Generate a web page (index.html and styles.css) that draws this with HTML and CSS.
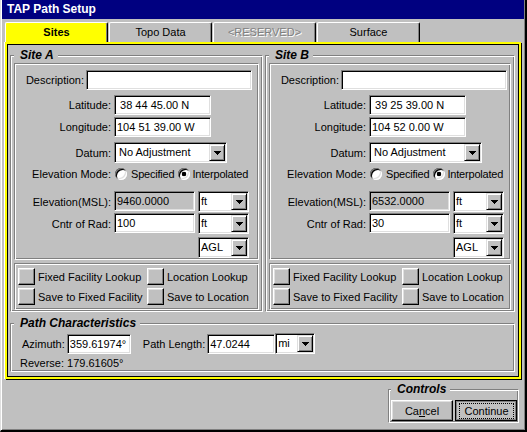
FILE: index.html
```html
<!DOCTYPE html>
<html lang="en">
<head>
<meta charset="utf-8">
<title>TAP Path Setup</title>
<link rel="stylesheet" href="styles.css">
</head>
<body>
<div class="window">
  <div class="titlebar">TAP Path Setup</div>
  <div class="tabs">
    <div class="tab tab-active">Sites</div>
    <div class="tab">Topo Data</div>
    <div class="tab tab-disabled">&lt;RESERVED&gt;</div>
    <div class="tab">Surface</div>
  </div>
  <div class="panel">
    <div class="sites">
      <fieldset class="group site">
        <legend>Site A</legend>
        <div class="box fields">
          <div class="row row-desc"><span class="lbl lbl-desc">Description:</span><input class="field f-desc" type="text" value=""></div>
          <div class="row row-lat"><span class="lbl">Latitude:</span><input class="field f-coord" type="text" value=" 38 44 45.00 N"></div>
          <div class="row row-lon"><span class="lbl">Longitude:</span><input class="field f-coord" type="text" value="104 51 39.00 W"></div>
          <div class="row row-datum"><span class="lbl">Datum:</span><div class="combo c-datum"><span class="combo-text">No Adjustment</span><span class="combo-btn"><svg width="7" height="4" viewBox="0 0 7 4"><polygon points="0,0 7,0 3.5,4" fill="#000"/></svg></span></div></div>
          <div class="row row-mode"><span class="lbl">Elevation Mode:</span><span class="radio"></span><span class="opt">Specified</span><span class="radio radio-on"></span><span class="opt opt-2">Interpolated</span></div>
          <div class="row row-elev"><span class="lbl">Elevation(MSL):</span><input class="field f-num f-ro" type="text" value="9460.0000" readonly><div class="combo c-unit"><span class="combo-text">ft</span><span class="combo-btn"><svg width="7" height="4" viewBox="0 0 7 4"><polygon points="0,0 7,0 3.5,4" fill="#000"/></svg></span></div></div>
          <div class="row row-cntr"><span class="lbl">Cntr of Rad:</span><input class="field f-num" type="text" value="100"><div class="combo c-unit"><span class="combo-text">ft</span><span class="combo-btn"><svg width="7" height="4" viewBox="0 0 7 4"><polygon points="0,0 7,0 3.5,4" fill="#000"/></svg></span></div></div>
          <div class="row row-agl"><div class="combo c-unit"><span class="combo-text">AGL</span><span class="combo-btn"><svg width="7" height="4" viewBox="0 0 7 4"><polygon points="0,0 7,0 3.5,4" fill="#000"/></svg></span></div></div>
        </div>
        <div class="box actions">
          <div class="action"><span class="sqbtn"></span><span>Fixed Facility Lookup</span></div>
          <div class="action"><span class="sqbtn"></span><span>Location Lookup</span></div>
          <div class="action"><span class="sqbtn"></span><span>Save to Fixed Facility</span></div>
          <div class="action"><span class="sqbtn"></span><span>Save to Location</span></div>
        </div>
      </fieldset>
      <fieldset class="group site">
        <legend>Site B</legend>
        <div class="box fields">
          <div class="row row-desc"><span class="lbl lbl-desc">Description:</span><input class="field f-desc" type="text" value=""></div>
          <div class="row row-lat"><span class="lbl">Latitude:</span><input class="field f-coord" type="text" value=" 39 25 39.00 N"></div>
          <div class="row row-lon"><span class="lbl">Longitude:</span><input class="field f-coord" type="text" value="104 52 0.00 W"></div>
          <div class="row row-datum"><span class="lbl">Datum:</span><div class="combo c-datum"><span class="combo-text">No Adjustment</span><span class="combo-btn"><svg width="7" height="4" viewBox="0 0 7 4"><polygon points="0,0 7,0 3.5,4" fill="#000"/></svg></span></div></div>
          <div class="row row-mode"><span class="lbl">Elevation Mode:</span><span class="radio"></span><span class="opt">Specified</span><span class="radio radio-on"></span><span class="opt opt-2">Interpolated</span></div>
          <div class="row row-elev"><span class="lbl">Elevation(MSL):</span><input class="field f-num f-ro" type="text" value="6532.0000" readonly><div class="combo c-unit"><span class="combo-text">ft</span><span class="combo-btn"><svg width="7" height="4" viewBox="0 0 7 4"><polygon points="0,0 7,0 3.5,4" fill="#000"/></svg></span></div></div>
          <div class="row row-cntr"><span class="lbl">Cntr of Rad:</span><input class="field f-num" type="text" value="30"><div class="combo c-unit"><span class="combo-text">ft</span><span class="combo-btn"><svg width="7" height="4" viewBox="0 0 7 4"><polygon points="0,0 7,0 3.5,4" fill="#000"/></svg></span></div></div>
          <div class="row row-agl"><div class="combo c-unit"><span class="combo-text">AGL</span><span class="combo-btn"><svg width="7" height="4" viewBox="0 0 7 4"><polygon points="0,0 7,0 3.5,4" fill="#000"/></svg></span></div></div>
        </div>
        <div class="box actions">
          <div class="action"><span class="sqbtn"></span><span>Fixed Facility Lookup</span></div>
          <div class="action"><span class="sqbtn"></span><span>Location Lookup</span></div>
          <div class="action"><span class="sqbtn"></span><span>Save to Fixed Facility</span></div>
          <div class="action"><span class="sqbtn"></span><span>Save to Location</span></div>
        </div>
      </fieldset>
    </div>
    <fieldset class="group path">
      <legend>Path Characteristics</legend>
      <div class="path-body">
        <div class="path-row">
          <span class="plbl plbl-az">Azimuth:</span><input class="field f-az" type="text" value="359.61974°">
          <span class="plbl plbl-len">Path Length:</span><input class="field f-len" type="text" value="47.0244"><div class="combo c-mi"><span class="combo-text">mi</span><span class="combo-btn"><svg width="7" height="4" viewBox="0 0 7 4"><polygon points="0,0 7,0 3.5,4" fill="#000"/></svg></span></div>
        </div>
        <div class="reverse">Reverse: 179.61605°</div>
      </div>
    </fieldset>
  </div>
  <div class="footer">
    <fieldset class="group controls">
      <legend>Controls</legend>
      <div class="btn-row">
        <button class="btn" type="button">Ca<u>n</u>cel</button>
        <button class="btn btn-default" type="button"><span class="focus">Continue</span></button>
      </div>
    </fieldset>
  </div>
</div>
</body>
</html>
```

FILE: styles.css
```css
* { box-sizing: border-box; }
html, body { margin: 0; padding: 0; }
body {
  background: #c0c0c0;
  font-family: "Liberation Sans", Arial, sans-serif;
  font-size: 11px;
  color: #000;
}
.window {
  width: 527px;
  height: 432px;
  background: #c0c0c0;
  border-left: 1px solid #dfdfdf;
  border-right: 2px solid #000;
  border-bottom: 2px solid #000;
  box-shadow: inset 1px 0 0 #fff, inset -1px -1px 0 #808080;
  padding: 0 1px;
  display: flex;
  flex-direction: column;
}
.titlebar {
  height: 19px;
  background: #000080;
  color: #fff;
  font-weight: bold;
  font-size: 12px;
  line-height: 19px;
  padding-left: 5px;
  flex: none;
}
.tabs {
  display: flex;
  gap: 1px;
  margin: 3px 0 0 3px;
  height: 20px;
  flex: none;
}
.tab {
  width: 103px;
  height: 20px;
  text-align: center;
  line-height: 19px;
  border-top: 1px solid #fff;
  border-left: 1px solid #fff;
  border-right: 1px solid #000;
  box-shadow: inset -1px 0 0 #808080;
  border-radius: 2px 2px 0 0;
}
.tab-active {
  background: #ffff00;
  font-weight: bold;
}
.tab-disabled {
  color: #808080;
  text-shadow: 1px 1px 0 #fff;
}
.panel {
  margin-left: 3px;
  width: 516px;
  height: 337px;
  flex: none;
  border: 2px solid #ffff00;
  box-shadow: inset 1px 1px 0 #000, inset -1px -1px 0 #000, 1px 1px 0 #000, -1px 0 0 #fff;
  padding: 4px 4px 5px 3px;
  display: flex;
  flex-direction: column;
  gap: 4px;
}
.sites {
  display: grid;
  grid-template-columns: 253px 250px;
  column-gap: 2px;
}
.group {
  margin: 0;
  min-width: 0;
  padding: 1px 3px 1px 3px;
  border: 1px solid;
  border-color: #808080 #fff #fff #808080;
  box-shadow: inset 1px 1px 0 #fff, inset -1px -1px 0 #808080;
}
.group legend {
  font-weight: bold;
  font-style: italic;
  font-size: 12px;
  line-height: 14px;
  padding: 0 4px 0 6px;
  margin: 0;
  background: #c0c0c0;
}
.site { height: 264px; }
.box {
  border: 1px solid;
  border-color: #808080 #fff #fff #808080;
  box-shadow: inset 1px 1px 0 #fff, inset -1px -1px 0 #808080;
}
.fields {
  height: 197px;
  padding-top: 6px;
}
.row {
  display: flex;
  align-items: center;
  white-space: nowrap;
}
.row-desc { height: 20px; }
.row-lat { height: 20px; margin-top: 5px; }
.row-lon { height: 20px; margin-top: 2px; }
.row-datum { height: 21px; margin-top: 5px; }
.row-mode { height: 14px; margin-top: 4px; }
.row-elev { height: 21px; margin-top: 10px; align-items: flex-start; }
.row-cntr { height: 21px; margin-top: 1px; align-items: flex-start; }
.row-agl { height: 21px; margin-top: 3px; padding-left: 183px; }
.row-elev .lbl, .row-cntr .lbl { align-self: center; }
.lbl {
  flex: none;
  width: 96px;
  text-align: right;
  margin-right: 3px;
}
.lbl-desc { width: 69px; margin-right: 2px; }
.field {
  flex: none;
  height: 20px;
  margin: 0;
  padding: 0 2px;
  border: 1px solid;
  border-color: #808080 #fff #fff #808080;
  box-shadow: inset 1px 1px 0 #000, inset -1px -1px 0 #dfdfdf;
  background: #fff;
  font-family: "Liberation Sans", Arial, sans-serif;
  font-size: 11px;
  color: #000;
  outline: none;
  border-radius: 0;
}
.f-desc { width: 166px; }
.f-coord { width: 97px; }
.f-num { width: 81px; }
.f-ro { background: #c0c0c0; }
.combo {
  flex: none;
  display: flex;
  height: 21px;
  padding: 1px;
  background: #fff;
  border: 1px solid;
  border-color: #808080 #fff #fff #808080;
  box-shadow: inset 1px 1px 0 #000, inset -1px -1px 0 #dfdfdf;
}
.combo-text {
  flex: 1;
  padding-left: 1px;
  line-height: 17px;
  white-space: nowrap;
  overflow: hidden;
}
.combo-btn {
  flex: none;
  width: 16px;
  height: 17px;
  display: flex;
  align-items: center;
  justify-content: center;
  background: #c0c0c0;
  border: 1px solid;
  border-color: #dfdfdf #000 #000 #dfdfdf;
  box-shadow: inset 1px 1px 0 #fff, inset -1px -1px 0 #808080;
}
.combo-btn svg { display: block; shape-rendering: crispEdges; }
.c-datum { width: 113px; }
.c-datum .combo-text { padding-left: 3px; }
.c-unit { width: 51px; margin-left: 3px; }
.row-agl .c-unit { margin-left: 0; }
.radio {
  flex: none;
  width: 12px;
  height: 12px;
  border-radius: 50%;
  background: #fff;
  box-shadow: inset 1px 1px 0 #808080, inset -1px -1px 0 #fff, inset 2px 2px 0 #000, inset -2px -2px 0 #dfdfdf;
  margin-left: 1px;
}
.radio-on {
  background: radial-gradient(circle, #000 0 2px, #fff 2.6px);
  margin-left: 4px;
}
.opt { margin-left: 4px; letter-spacing: -0.2px; }
.opt-2 { margin-left: 2px; }
.actions {
  margin-top: 3px;
  height: 47px;
  padding: 4px 0 0 3px;
  display: grid;
  grid-template-columns: 129px auto;
  grid-auto-rows: 17px;
  row-gap: 3px;
}
.action {
  display: flex;
  align-items: center;
  white-space: nowrap;
}
.sqbtn {
  flex: none;
  width: 17px;
  height: 17px;
  margin-right: 3px;
  border: 1px solid;
  border-color: #fff #000 #000 #fff;
  box-shadow: inset -1px -1px 0 #808080, inset 1px 1px 0 #dfdfdf;
}
.path { height: 56px; }
.path-body { padding: 2px 0 0 6px; }
.path-row {
  display: flex;
  align-items: center;
  height: 21px;
  white-space: nowrap;
}
.plbl-az { margin-left: 2px; margin-right: 2px; }
.plbl-len { margin-left: 12px; margin-right: 2px; }
.f-az { width: 64px; }
.f-len { width: 68px; }
.c-mi { width: 40px; }
.c-mi .combo-text { padding-left: 1px; }
.reverse {
  margin-top: 2px;
  line-height: 14px;
  white-space: nowrap;
}
.footer {
  display: flex;
  justify-content: flex-end;
  margin-top: 3px;
  padding-right: 5px;
}
.controls {
  width: 131px;
  height: 41px;
  padding: 4px 1px 1px 2px;
}
.btn-row {
  display: flex;
  gap: 2px;
}
.btn {
  width: 62px;
  height: 21px;
  margin: 0;
  padding: 0;
  background: #c0c0c0;
  font-family: "Liberation Sans", Arial, sans-serif;
  font-size: 11px;
  color: #000;
  border: 1px solid;
  border-color: #fff #000 #000 #fff;
  box-shadow: inset -1px -1px 0 #808080, inset 1px 1px 0 #dfdfdf;
  border-radius: 0;
  display: flex;
  align-items: center;
  justify-content: center;
}
.btn-default {
  border-color: #000;
  box-shadow: inset 0 0 0 1px #808080;
  padding: 2px 2px 1px 3px;
  align-items: stretch;
}
.focus {
  flex: 1;
  border: 1px dotted #000;
  display: flex;
  align-items: center;
  justify-content: center;
}
```
